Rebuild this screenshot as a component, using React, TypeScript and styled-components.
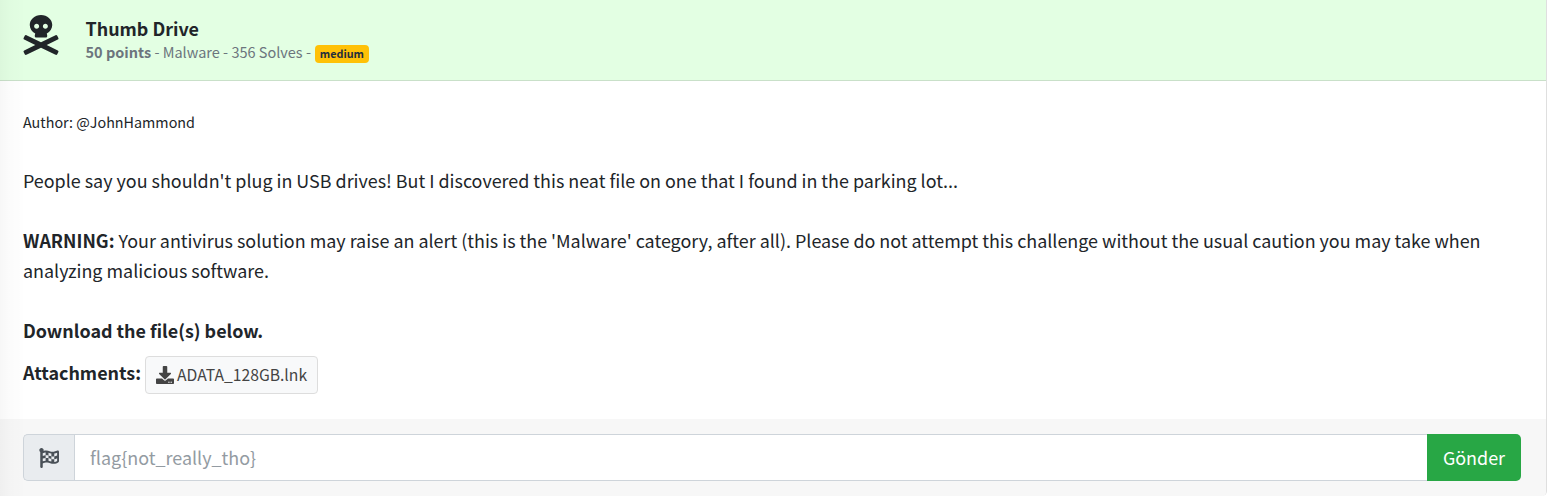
import React from 'react';
import styled, { createGlobalStyle } from 'styled-components';
import { FaSkullCrossbones, FaDownload, FaFlagCheckered } from 'react-icons/fa';

const sans = `'Source Sans Pro', 'Noto Sans CJK SC', 'Open Sans', sans-serif`;

const Global = createGlobalStyle`
  * { box-sizing: border-box; }
  body { margin: 0; background: #fff; color: #212529; font-family: ${sans}; }
`;

const Card = styled.main`
  height: 496px;
  display: flex;
  flex-direction: column;
  border-right: 1px solid #dfdfdf;
  border-bottom-right-radius: 5px;
  overflow: hidden;
  position: relative;
  &::before {
    content: '';
    position: absolute;
    inset: 0 auto 0 0;
    width: 23px;
    background: linear-gradient(to right, rgba(0, 0, 0, 0.03), rgba(0, 0, 0, 0.01) 50%, rgba(0, 0, 0, 0.004));
    pointer-events: none;
  }
`;

const Header = styled.header`
  height: 81px;
  flex: none;
  display: flex;
  background: #e3ffe3;
  border-bottom: 1px solid #c9e0c9;
  padding: 15px 23px 0 20.5px;
`;

const IconSlot = styled.div`
  width: 65px;
  font-size: 40px;
  line-height: 0;
`;

const Title = styled.h1`
  margin: 2px 0 0;
  font-size: 17.92px;
  line-height: 23px;
  font-weight: 700;
`;

const Meta = styled.div`
  display: flex;
  align-items: center;
  gap: 4px;
  color: #6c757d;
  font-size: 14.5px;
  line-height: 24px;
  white-space: pre;
`;

const Badge = styled.span`
  background: #ffc107;
  color: #1f2d3d;
  font-size: 10.8px;
  font-weight: 700;
  line-height: 17px;
  height: 18px;
  width: 54px;
  margin-top: 4px;
  text-align: center;
  border-radius: 4px;
`;

const Body = styled.section`
  height: 338px;
  flex: none;
  padding: 26px 23px 0;
  font-size: 17.91px;
  line-height: 30px;
`;

const Author = styled.div`
  font-size: 14.34px;
  margin-bottom: -2px;
`;

const Paragraph = styled.p`
  margin: 30px 0 0;
`;

const Attachments = styled.div`
  display: flex;
  gap: 4px;
  margin-top: 9px;
  line-height: 36px;
`;

const FileButton = styled.button`
  display: flex;
  align-items: center;
  gap: 3px;
  height: 38px;
  width: 173px;
  margin-top: 2px;
  padding: 0 10px;
  border: 1px solid #ddd;
  border-radius: 4px;
  background: #f8f9fa;
  color: #444;
  font: 15.7px ${sans};
  svg { flex: none; }
`;

const FileName = styled.span`
  padding-bottom: 2px;
`;

const Footer = styled.footer`
  flex: 1;
  display: flex;
  padding: 15px 25px 15px 23px;
  background: #f7f7f7;
`;

const Flag = styled.span`
  width: 51px;
  display: grid;
  place-items: center;
  background: #e9ecef;
  border: 1px solid #ced4da;
  border-right: 0;
  border-radius: 5px 0 0 5px;
  font-size: 20px;
  color: #495057;
`;

const Input = styled.input`
  flex: 1;
  min-width: 0;
  border: 1px solid #ced4da;
  border-right: 0;
  padding: 0 15px 2px;
  font: 17.95px ${sans};
  &::placeholder { color: #939ba2; opacity: 1; }
`;

const Submit = styled.button`
  width: 94px;
  padding: 0 6px 2px;
  border: 0;
  border-radius: 0 5px 5px 0;
  background: #28a745;
  color: #fff;
  font: 17.95px ${sans};
`;

export default function App() {
  return (
    <Card>
      <Global />
      <Header>
        <IconSlot><FaSkullCrossbones /></IconSlot>
        <div>
          <Title>Thumb Drive</Title>
          <Meta><span><b>50 points</b> - Malware - 356 Solves -</span><Badge>medium</Badge></Meta>
        </div>
      </Header>
      <Body>
        <Author>Author: @JohnHammond</Author>
        <Paragraph>People say you shouldn't plug in USB drives! But I discovered this neat file on one that I found in the parking lot...</Paragraph>
        <Paragraph><b>WARNING:</b> Your antivirus solution may raise an alert (this is the 'Malware' category, after all). Please do not attempt this challenge without the usual caution you may take when analyzing malicious software.</Paragraph>
        <Paragraph><b>Download the file(s) below.</b></Paragraph>
        <Attachments><b>Attachments:</b><FileButton><FaDownload size={18} /><FileName>ADATA_128GB.lnk</FileName></FileButton></Attachments>
      </Body>
      <Footer>
        <Flag><FaFlagCheckered /></Flag>
        <Input placeholder="flag{not_really_tho}" />
        <Submit>Gönder</Submit>
      </Footer>
    </Card>
  );
}
